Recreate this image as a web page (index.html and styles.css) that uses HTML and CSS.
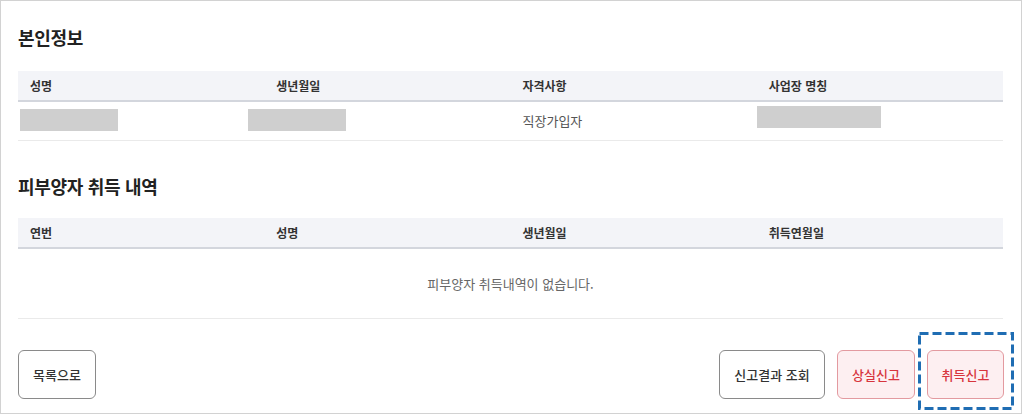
FILE: index.html
```html
<!DOCTYPE html>
<html lang="ko">
<head>
<meta charset="utf-8">
<link rel="stylesheet" href="styles.css">
</head>
<body>
<div class="frame">
  <h2 class="title t1">본인정보</h2>
  <div class="table">
    <div class="thead">
      <div class="th">성명</div>
      <div class="th">생년월일</div>
      <div class="th">자격사항</div>
      <div class="th">사업장 명칭</div>
    </div>
    <div class="row info">
      <div class="td"></div>
      <div class="td"></div>
      <div class="td">직장가입자</div>
      <div class="td"></div>
      <span class="mask m1"></span>
      <span class="mask m2"></span>
      <span class="mask m3"></span>
    </div>
  </div>

  <h2 class="title t2">피부양자 취득 내역</h2>
  <div class="table">
    <div class="thead">
      <div class="th">연번</div>
      <div class="th">성명</div>
      <div class="th">생년월일</div>
      <div class="th">취득연월일</div>
    </div>
    <div class="row empty">피부양자 취득내역이 없습니다.</div>
  </div>

  <div class="actions">
    <button class="btn">목록으로</button>
    <div class="right">
      <button class="btn wide">신고결과 조회</button>
      <button class="btn red">상실신고</button>
      <button class="btn red focus">취득신고<svg class="dash" width="96" height="78" viewBox="0 0 96 78"><rect x="1.5" y="1.5" width="93" height="75" fill="none" stroke="#1f6db3" stroke-width="3" stroke-dasharray="9 4"/></svg></button>
    </div>
  </div>
</div>
</body>
</html>
```
FILE: styles.css
```css
* { box-sizing: border-box; }
body {
  margin: 0;
  background: #fff;
  font-family: "Noto Sans CJK KR", "Noto Sans", sans-serif;
}
.frame {
  width: 1022px;
  height: 414px;
  border: 1px solid #d2d2d2;
  padding: 23px 18px 0 17px;
}
.title {
  margin: 0;
  font-size: 18px;
  line-height: 26px;
  font-weight: 700;
  color: #222;
  letter-spacing: -0.3px;
}
.t1 { margin-bottom: 21px; }
.t2 { margin-top: 32px; margin-bottom: 19px; }
.thead {
  display: grid;
  grid-template-columns: repeat(4, 1fr);
  background: #f3f4f8;
  border-bottom: 2px solid #d3d6dd;
  height: 31px;
}
.th {
  padding-left: 12px;
  font-size: 12px;
  font-weight: 700;
  color: #333;
  line-height: 29px;
}
.row {
  border-bottom: 1px solid #eaeaea;
}
.info {
  position: relative;
  display: grid;
  grid-template-columns: repeat(4, 1fr);
  height: 39px;
}
.td {
  padding-left: 12px;
  font-size: 13px;
  color: #555;
  line-height: 38px;
}
.mask {
  position: absolute;
  background: #cfcfcf;
  height: 22px;
}
.m1 { left: 2px; top: 7px; width: 98px; }
.m2 { left: 230px; top: 7px; width: 98px; }
.m3 { left: 739px; top: 4px; width: 124px; }
.empty {
  height: 70px;
  display: flex;
  align-items: center;
  justify-content: center;
  font-size: 13px;
  color: #666;
}
.actions {
  display: flex;
  justify-content: space-between;
  margin-top: 31px;
}
.right {
  display: flex;
  gap: 12px;
  margin-right: -1px;
}
.btn {
  height: 49px;
  width: 78px;
  border: 1px solid #8a8a8a;
  border-radius: 6px;
  background: #fff;
  font-family: inherit;
  font-size: 13px;
  font-weight: 500;
  color: #333;
  padding: 0;
}
.btn.wide { width: 106px; }
.btn.red {
  background: #fdeff1;
  border-color: #e39aa0;
  color: #d7353d;
}
.btn.focus { position: relative; width: 77px; }
.dash {
  position: absolute;
  left: -10px;
  top: -19px;
  display: block;
}
```
